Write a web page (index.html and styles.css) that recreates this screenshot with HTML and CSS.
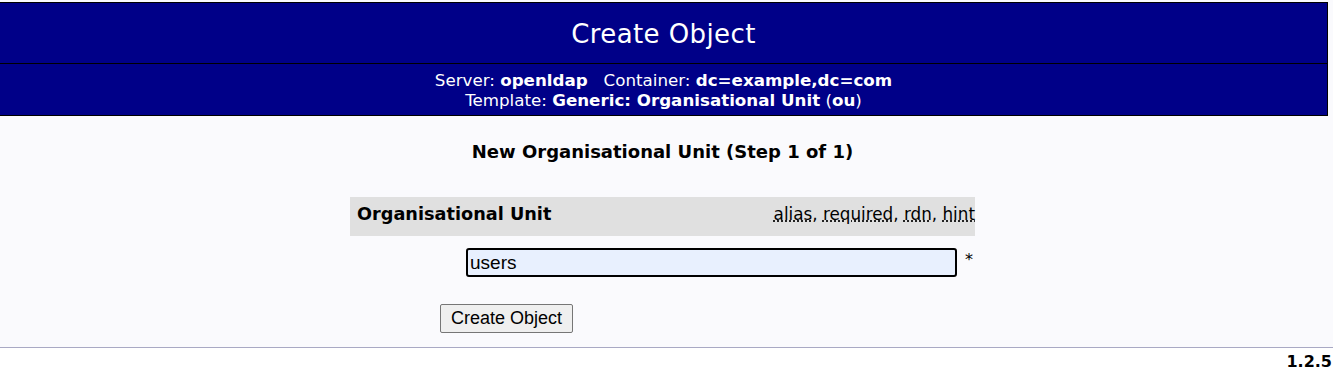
FILE: index.html
```html
<!DOCTYPE html>
<html lang="en">
<head>
    <meta charset="UTF-8">
    <title>Create Object</title>
    <link rel="stylesheet" href="styles.css">
</head>
<body>

    <!-- Main frame -->
    <div class="frame">
        <div class="head">
            <div class="head-title">Create Object</div>
            <div class="head-sub">
                Server: <b>openldap</b>&nbsp;&nbsp; Container: <b>dc=example,dc=com</b><br>
                Template: <b>Generic: Organisational Unit</b> (<b>ou</b>)
            </div>
        </div>

        <div class="content">
            <div class="step">New Organisational Unit (Step 1 of 1)</div>

            <form class="form">
                <div class="attr-row">
                    <span class="attr-name">Organisational Unit</span>
                    <span class="attr-flags">
                        <abbr title="Alias">alias</abbr>, <abbr title="Required">required</abbr>, <abbr title="RDN">rdn</abbr>, <abbr title="Hint">hint</abbr>
                    </span>
                </div>
                <div class="value-row">
                    <input type="text" class="value" value="users">
                    <span class="req">*</span>
                </div>
                <div class="submit-row">
                    <button type="button">Create Object</button>
                </div>
            </form>
        </div>
    </div>

    <!-- Footer -->
    <div class="footer">1.2.5</div>

</body>
</html>
```

FILE: styles.css
```css
body {
    margin: 0;
    padding: 0;
    background-color: white;
    font-family: "DejaVu Sans", Verdana, sans-serif;
    color: black;
}

/* Main frame */
.frame {
    width: 1333px;
    height: 345px;
    padding-top: 2px;
    background-color: #fafafd;
    border-bottom: 1px solid #a9a9c4;
}

.head {
    width: 1327px;
    background-color: #000088;
    border: 1px solid black;
    border-left: none;
    color: white;
    text-align: center;
}

.head-title {
    height: 60px;
    line-height: 62px;
    font-size: 26px;
    letter-spacing: 0.4px;
    border-bottom: 1px solid black;
}

.head-sub {
    height: 51px;
    padding-top: 6px;
    box-sizing: border-box;
    font-size: 16.7px;
    line-height: 20px;
}

.content {
    width: 1325px;
}

.step {
    text-align: center;
    font-weight: bold;
    font-size: 18px;
    margin-top: 25px;
}

/* Form */
.form {
    width: 625px;
    margin: 35px auto 0;
}

.attr-row {
    display: flex;
    justify-content: space-between;
    align-items: baseline;
    height: 39px;
    box-sizing: border-box;
    padding: 7px 0 0 7px;
    background-color: #e0e0e0;
}

.attr-name {
    font-weight: bold;
    font-size: 17.7px;
}

.attr-flags {
    font-size: 16.8px;
}

.attr-flags abbr {
    text-decoration: underline dotted;
}

.value-row {
    display: flex;
    align-items: flex-start;
    margin-top: 12px;
    padding-left: 116px;
}

.value {
    width: 491px;
    height: 29px;
    box-sizing: border-box;
    border: 2px solid black;
    border-radius: 3px;
    background-color: #e8f0fe;
    font-family: "Liberation Sans", Arial, sans-serif;
    font-size: 19px;
    padding: 0 2px;
    outline: none;
}

.req {
    margin-left: 8px;
    font-size: 16px;
    margin-top: 2px;
}

.submit-row {
    margin-top: 27px;
    padding-left: 90px;
}

.submit-row button {
    font-family: "Liberation Sans", Arial, sans-serif;
    font-size: 18px;
    height: 29px;
    padding: 0 10px;
    background-color: #efefef;
    border: 1px solid #767676;
    border-radius: 2px;
}

/* Footer */
.footer {
    width: 1332px;
    text-align: right;
    font-weight: bold;
    font-size: 16px;
    padding-top: 4px;
}
```
